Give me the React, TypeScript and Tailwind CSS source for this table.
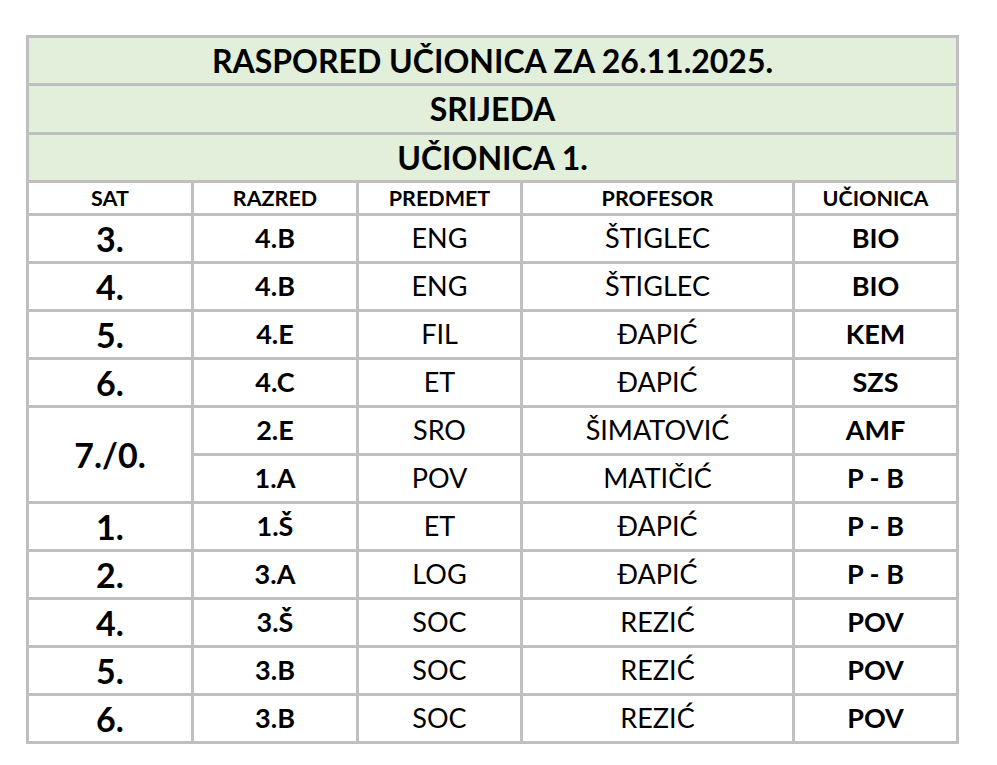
import React from "react";

type Row = { sat?: string; span?: number; raz: string; pred: string; prof: string; uc: string };

const rows: Row[] = [
  { sat: "3.", raz: "4.B", pred: "ENG", prof: "ŠTIGLEC", uc: "BIO" },
  { sat: "4.", raz: "4.B", pred: "ENG", prof: "ŠTIGLEC", uc: "BIO" },
  { sat: "5.", raz: "4.E", pred: "FIL", prof: "ĐAPIĆ", uc: "KEM" },
  { sat: "6.", raz: "4.C", pred: "ET", prof: "ĐAPIĆ", uc: "SZS" },
  { sat: "7./0.", span: 2, raz: "2.E", pred: "SRO", prof: "ŠIMATOVIĆ", uc: "AMF" },
  { raz: "1.A", pred: "POV", prof: "MATIČIĆ", uc: "P - B" },
  { sat: "1.", raz: "1.Š", pred: "ET", prof: "ĐAPIĆ", uc: "P - B" },
  { sat: "2.", raz: "3.A", pred: "LOG", prof: "ĐAPIĆ", uc: "P - B" },
  { sat: "4.", raz: "3.Š", pred: "SOC", prof: "REZIĆ", uc: "POV" },
  { sat: "5.", raz: "3.B", pred: "SOC", prof: "REZIĆ", uc: "POV" },
  { sat: "6.", raz: "3.B", pred: "SOC", prof: "REZIĆ", uc: "POV" },
];

const cell = "bg-white flex items-center justify-center text-black";

export default function App() {
  return (
    <div className="min-h-[765px] w-[997px] bg-white pt-[35px] pl-[26px]" style={{ fontFamily: "Lato, 'Open Sans', sans-serif" }}>
      <div className="grid w-[933px] grid-cols-[162px_162px_161px_269px_161px] grid-rows-[45px_46px_45px_30px_repeat(11,45px)] gap-[3px] bg-[#bfbfbf] p-[3px]">
        <div className="col-span-5 flex items-center justify-center bg-[#e2efda] text-[32px] font-bold text-black">RASPORED UČIONICA ZA 26.11.2025.</div>
        <div className="col-span-5 flex items-center justify-center bg-[#e2efda] text-[32px] font-bold text-black">SRIJEDA</div>
        <div className="col-span-5 flex items-center justify-center bg-[#e2efda] text-[32px] font-bold text-black">UČIONICA 1.</div>
        {["SAT", "RAZRED", "PREDMET", "PROFESOR", "UČIONICA"].map((h) => (
          <div key={h} className={`${cell} text-[21.5px] font-bold`}>{h}</div>
        ))}
        {rows.map((r, i) => (
          <React.Fragment key={i}>
            {r.sat !== undefined && (
              <div className={`${cell} text-[34px] font-bold ${r.span === 2 ? "row-span-2" : ""}`}>{r.sat}</div>
            )}
            <div className={`${cell} text-[27px] font-bold`}>{r.raz}</div>
            <div className={`${cell} text-[27px]`}>{r.pred}</div>
            <div className={`${cell} text-[27px]`}>{r.prof}</div>
            <div className={`${cell} text-[27px] font-bold`}>{r.uc}</div>
          </React.Fragment>
        ))}
      </div>
    </div>
  );
}
